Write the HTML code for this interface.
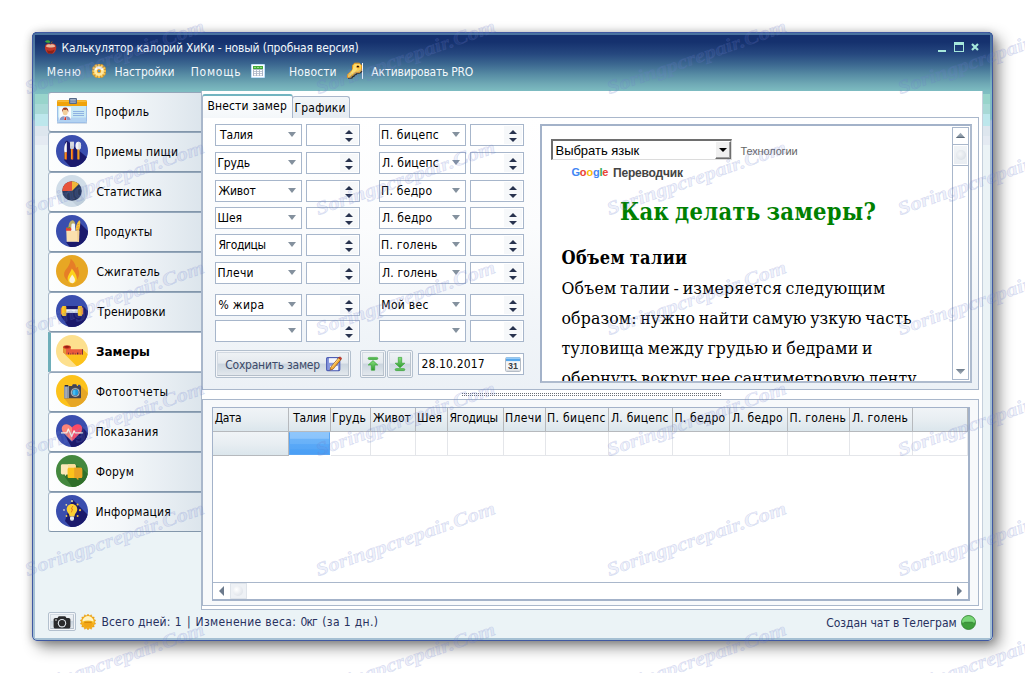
<!DOCTYPE html><html lang="ru"><head><meta charset="utf-8"><title>Калькулятор калорий ХиКи</title><style>
*{box-sizing:border-box;margin:0;padding:0}
html,body{width:1025px;height:673px;overflow:hidden;background:#fff}
body{position:relative;font-stretch:condensed;font-family:"DejaVu Sans Condensed","DejaVu Sans","Liberation Sans",sans-serif;font-size:12px;color:#000;line-height:14px}
.a{position:absolute}
.t{position:absolute;white-space:nowrap;line-height:14px;height:14px}
#win{left:32px;top:32px;width:961px;height:609px;border-radius:5px;
 box-shadow:6px 6px 15px rgba(0,0,0,.45),0 1px 9px rgba(0,0,0,.22);
 background:linear-gradient(to bottom,#15306e 0px,#15316e 10px,#26487f 22px,#3b6790 32px,#558aa3 42px,#6fa9b5 52px,#7dbcc1 59px,#80bec2 62px,#98d4cb 62px,#98d4cb 72px,#a8d9d6 72px,#a8d9d6 82px,#bde7ec 82px,#bde7ec 94px,#dde6ee 94px,#dde6ee 104px,#e4eaf2 104px,#e4eaf2 113px,#ebf3f6 113px,#ebf3f6 100%)}
#frame{left:32px;top:32px;width:961px;height:609px;border-radius:5px;border:1px solid #4059a2}
.fv{position:absolute;top:33px;width:2px;height:607px;background:linear-gradient(to bottom,#4a73a0 0px,#4a73a0 8px,#5a86a8 28px,#78b0be 50px,#80bcc4 60px,#80bcc4 86px,#a2bad2 88px,#a5c0d3 100%)}
.fh{position:absolute;left:33px;width:959px;height:2px}
.wt{color:#f1f7fb}
.sb{position:absolute;left:48px;width:154px;height:40px;border-bottom:1px solid #8397ab;border-left:1px solid #a9b9ca;border-top:1px solid #93a6ba;
 border-radius:3px 0 0 3px;background:linear-gradient(to right,#fdfefe 0%,#f5f8fa 45%,#e8eef3 75%,#dce5ec 100%)}
.sb .lbl{position:absolute;left:48px;top:12px;line-height:14px;white-space:nowrap}
.sb svg{position:absolute;left:7px;top:2px;width:32px;height:32px}
.sb.sel{background:#fff;border-left:3px solid #6eaeb9;border-top:1px solid #a9b7c6;border-bottom:1px solid #a9b7c6;border-radius:0;width:155px}
.sb.sel .lbl{font-weight:bold;left:45px}
.sb.sel svg{left:5px}
.cb{position:absolute;width:87px;height:22px;border:1px solid #a7b6cb;background:#fff}
.cb span{position:absolute;left:3px;top:3px;line-height:14px;white-space:nowrap}
.cb i{position:absolute;right:5px;top:7px;width:0;height:0;border-left:4.5px solid transparent;border-right:4.5px solid transparent;border-top:5px solid #84919e}
.sp{position:absolute;width:54px;height:22px;border:1px solid #a7b6cb;background:#fff}
.sp b{position:absolute;right:1px;top:1px;width:18px;height:18px;background:#f6f8fa}
.sp i{position:absolute;right:6.5px;width:0;height:0;border-left:4px solid transparent;border-right:4px solid transparent}
.sp i.u{top:4.5px;border-bottom:4.5px solid #27324e}
.sp i.d{top:13px;border-top:4.5px solid #27324e}
.btn{position:absolute;border:1px solid #b3c0ce;border-radius:2px;background:#f4f6f9}
.btn u{position:absolute;left:1px;top:1px;right:1px;bottom:1px;border:1px solid #d3dae2;border-right-color:#b9c3cd;border-bottom-color:#b4bec9;
 background:linear-gradient(to bottom,#eef2f5 0%,#e4e9ee 46%,#cbd5df 50%,#d3dce4 70%,#e3e8ed 100%);text-decoration:none}
.gh{position:absolute;top:408px;height:24px;border-right:1px solid #b6b9bd;border-bottom:1px solid #b6b9bd;
 background:linear-gradient(to bottom,#f0f4f7 0%,#e8eef2 50%,#dbe6ec 100%)}
.gh span{position:absolute;left:3px;top:4px;white-space:nowrap;line-height:14px}
.gc{position:absolute;top:432px;height:24px;border-right:1px solid #e4e6ea;border-bottom:1px solid #e4e6ea;background:#fff}
.web{font-family:"DejaVu Serif Condensed","DejaVu Serif","Liberation Serif",serif;color:#000}
.wm{position:absolute;white-space:nowrap;font-family:"Liberation Serif","DejaVu Serif",serif;font-style:italic;font-weight:bold;font-size:19px;line-height:22px;height:22px;color:rgba(120,138,215,.15);-webkit-text-stroke:.7px rgba(105,120,200,.19);transform:rotate(-19.4deg) scaleX(1.19);transform-origin:0 100%;pointer-events:none}
</style></head><body><div id="win" class="a"></div><svg class="a" style="left:43px;top:39px" width="15" height="16" viewBox="0 0 15 16"><path d="M2 2.200C4 .6 6.600 1 7.400 3.200 5.200 4.200 3.200 3.800 2 2.200z" fill="#3ea63a"/><path d="M8 4.400l1.200-2" stroke="#8a5a2a" stroke-width="1" fill="none"/><path d="M7.500 5C5.800 3.900 2.600 4.300 2 7.400c-.5 3 1.600 6.900 3.700 7.200 1 .15 1.400-.25 1.900-.25s1 .4 2 .25c2.100-.3 4.100-4.200 3.600-7.200C12.600 4.300 9.200 3.900 7.500 5z" fill="#c0392b"/><path d="M3 7.400c.5-2 2.500-2.600 4.500-1.700 2-.9 4.200-.3 4.700 1.700-1.600 1.400-7.600 1.400-9.200 0z" fill="#e8b9a0"/><path d="M4 11c2 1.200 5 1.200 7.600-.5-.6 2-1.600 3.600-2.800 3.900-.8.200-1.200-.2-1.700-.2s-.9.400-1.700.2C4.600 14.100 4.300 12.500 4 11z" fill="#8e2216"/></svg><div class="t wt" style="left:61.50px;top:41px;line-height:14px;height:14px;letter-spacing:-0.171px;">Калькулятор калорий ХиКи - новый (пробная версия)</div><div class="a" style="left:938px;top:50px;width:8px;height:2px;background:#a6e8db"></div><div class="a" style="left:954px;top:42px;width:10px;height:10px;border:1px solid #a6e8db;border-top-width:3px"></div><svg class="a" style="left:971px;top:43px" width="8" height="8" viewBox="0 0 8 8"><path d="M1 1l6 6M7 1L1 7" stroke="#a6e8db" stroke-width="2.200" fill="none"/></svg><div class="t wt" style="left:46.70px;top:65px;line-height:14px;height:14px;letter-spacing:0.660px;">Меню</div><svg class="a" style="left:92px;top:64px" width="14" height="14" viewBox="0 0 14 14"><g fill="#fbd56a" stroke="#e8930c" stroke-width=".7"><rect x="5.800" y="0" width="2.400" height="3.200" rx=".5" transform="rotate(0 7 7)"/><rect x="5.800" y="0" width="2.400" height="3.200" rx=".5" transform="rotate(30 7 7)"/><rect x="5.800" y="0" width="2.400" height="3.200" rx=".5" transform="rotate(60 7 7)"/><rect x="5.800" y="0" width="2.400" height="3.200" rx=".5" transform="rotate(90 7 7)"/><rect x="5.800" y="0" width="2.400" height="3.200" rx=".5" transform="rotate(120 7 7)"/><rect x="5.800" y="0" width="2.400" height="3.200" rx=".5" transform="rotate(150 7 7)"/><rect x="5.800" y="0" width="2.400" height="3.200" rx=".5" transform="rotate(180 7 7)"/><rect x="5.800" y="0" width="2.400" height="3.200" rx=".5" transform="rotate(210 7 7)"/><rect x="5.800" y="0" width="2.400" height="3.200" rx=".5" transform="rotate(240 7 7)"/><rect x="5.800" y="0" width="2.400" height="3.200" rx=".5" transform="rotate(270 7 7)"/><rect x="5.800" y="0" width="2.400" height="3.200" rx=".5" transform="rotate(300 7 7)"/><rect x="5.800" y="0" width="2.400" height="3.200" rx=".5" transform="rotate(330 7 7)"/></g><circle cx="7" cy="7" r="4.900" fill="#fde9a4"/><path d="M2.600 6.400a4.500 4.500 0 0 1 8.800 0c-2.800-1.300-6-1.300-8.800 0z" fill="#fffef8"/><circle cx="7" cy="7.100" r="2.200" fill="#f0a21c"/><circle cx="7" cy="7.100" r="1.200" fill="#4a8cc8"/></svg><div class="t wt" style="left:114.50px;top:65px;line-height:14px;height:14px;letter-spacing:-0.107px;">Настройки</div><div class="t wt" style="left:190.70px;top:65px;line-height:14px;height:14px;letter-spacing:0.771px;">Помощь</div><svg class="a" style="left:251px;top:64px" width="14" height="14" viewBox="0 0 14 14"><rect width="14" height="14" rx="1" fill="#bfe0fb"/><rect x="1" y="1" width="12" height="12" fill="#fff"/><rect x="2" y="2" width="10" height="3.200" fill="#45a83a"/><g fill="#8fe388"><rect x="2.900" y="3.100" width="2.200" height="1" rx=".4"/><rect x="5.900" y="3.100" width="2.200" height="1" rx=".4"/><rect x="8.900" y="3.100" width="2.200" height="1" rx=".4"/></g><rect x="2" y="5.200" width="10" height="6.800" fill="#a9b3c6"/><g fill="#fff"><rect x="2.9" y="5.9" width="2.200" height="1.300" rx=".3"/><rect x="5.9" y="5.9" width="2.200" height="1.300" rx=".3"/><rect x="8.9" y="5.9" width="2.200" height="1.300" rx=".3"/><rect x="2.9" y="8" width="2.200" height="1.300" rx=".3"/><rect x="5.9" y="8" width="2.200" height="1.300" rx=".3"/><rect x="8.9" y="8" width="2.200" height="1.300" rx=".3"/><rect x="2.9" y="10.1" width="2.200" height="1.300" rx=".3"/><rect x="5.9" y="10.1" width="2.200" height="1.300" rx=".3"/><rect x="8.9" y="10.1" width="2.200" height="1.300" rx=".3"/></g></svg><div class="t wt" style="left:289.00px;top:65px;line-height:14px;height:14px;letter-spacing:0.114px;">Новости</div><svg class="a" style="left:346px;top:62px" width="18" height="18" viewBox="0 0 18 18"><path d="M16.500 1v16" stroke="#f2f6fb" stroke-width="1"/><path d="M2 16.200l3.800-.2 1-1.500 1.300-.3.700-1.400 1.500-.3.700-1.200 3.600-.6 1.400-1.600" stroke="#2a1c08" stroke-width="1.300" fill="none" opacity=".85"/><path d="M8.500 1.200h5l2 2.200v4.800l-2 2.300H9.800L8.600 12l-1.400.2-.6 1.400-1.500.3-.8 1.500H1.500v-2.600l5-5.200V3.400z" fill="#fbd04e" stroke="#e5941c" stroke-width="1"/><path d="M9 2.200h4.400l1.400 1.600-7 7-4.800 3.700z" fill="#fde27e" opacity=".8"/><ellipse cx="11.900" cy="4.800" rx="1.700" ry="1.500" fill="#e08a1a"/><ellipse cx="11.900" cy="4.500" rx="1.100" ry=".8" fill="#1a1206"/></svg><div class="t wt" style="left:371.30px;top:65px;line-height:14px;height:14px;letter-spacing:-0.240px;">Активировать PRO</div><div class="sb" style="top:92px"><svg viewBox="0 0 32 32"><rect x="1" y="27" width="30" height="1.600" fill="#9fb4cf" opacity=".7"/><rect x="1.500" y="5.500" width="29" height="22" rx="1" fill="#c9e9f4" stroke="#9dbfe8" stroke-width="1"/><rect x="2" y="22.500" width="28" height="4.500" fill="#b3d3f2"/><path d="M1 6.500a1.500 1.500 0 0 1 1.500-1.500h27a1.500 1.500 0 0 1 1.500 1.500V11H1z" fill="#f0a30a"/><rect x="1.500" y="5.500" width="29" height="1.200" fill="#fbc64a"/><rect x="3.300" y="12.200" width="11.700" height="12.800" fill="#fdfdfd"/><path d="M3.600 25c.3-2.600 2.200-3.400 4-3.700h3.200c1.800.3 3.700 1.100 4 3.700z" fill="#8a9ccb"/><path d="M8.300 21.500h1.800l.4 3.500H7.900z" fill="#fff"/><path d="M8.700 22h1l.5 3H8.200z" fill="#d02a1e"/><ellipse cx="9.200" cy="17" rx="2.500" ry="3.200" fill="#f3cf9b"/><path d="M6.200 17.500c-.6-3 .6-5 3-5s3.600 2 3 5c-.3-1.600-.9-2.600-1.600-3-.8.500-2.200.5-2.900.1-.7.500-1.200 1.400-1.500 2.900z" fill="#9a3316"/><g stroke="#8fb2e2" stroke-width="1"><path d="M17 16.500h11M17 18.500h11M17 20.500h11"/></g><rect x="13" y="3" width="8" height="6" rx="1" fill="#566a8a"/><rect x="14.200" y="4.300" width="5.600" height="1.200" fill="#c8d3e3"/><rect x="14.200" y="6.500" width="5.600" height="1.200" fill="#aebbd0"/></svg></div><div class="t" style="left:95.70px;top:105px;line-height:14px;height:14px;letter-spacing:0.379px;">Профиль</div><div class="sb" style="top:132px"><svg viewBox="0 0 32 32"><defs><clipPath id="c2"><circle cx="16" cy="16" r="16"/></clipPath></defs><circle cx="16" cy="16" r="16" fill="#3a4eae"/><polygon clip-path="url(#c2)" points="9,7 11,5.500 40,30 40,40 22,40 8,25" fill="#1b1a6c"/><path d="M10.800 6.800c-2.600 2.400-3 7.400-2.300 10.800h2.300z" fill="#fafafa"/><rect x="8.500" y="17.400" width="2.300" height="7" fill="#f39a1e"/><rect x="9.900" y="17.400" width=".9" height="7" fill="#e5541f"/><path d="M14 6.800h4v5.600c0 1.200-.8 2-2 2s-2-.8-2-2z" fill="#c9ced6"/><path d="M15 6.800v4M16 6.800v4M17 6.800v4" stroke="#e8ebef" stroke-width=".6"/><rect x="14.900" y="14" width="2.200" height="10.400" fill="#f39a1e"/><rect x="16.200" y="14" width=".9" height="10.400" fill="#e5541f"/><ellipse cx="22.300" cy="10.800" rx="2.800" ry="4.100" fill="#f4f6f8"/><path d="M22.300 6.700a2.800 4.100 0 0 1 0 8.200z" fill="#d8dde4"/><rect x="21.300" y="14.500" width="2" height="9.900" fill="#f39a1e"/><rect x="22.500" y="14.500" width=".8" height="9.900" fill="#e5a01e"/></svg></div><div class="t" style="left:95.70px;top:145px;line-height:14px;height:14px;letter-spacing:0.232px;">Приемы пищи</div><div class="sb" style="top:172px"><svg viewBox="0 0 32 32"><defs><clipPath id="c3"><circle cx="16" cy="16" r="16"/></clipPath></defs><circle cx="16" cy="16" r="16" fill="#d0dde8"/><polygon clip-path="url(#c3)" points="16,26 23,19 40,34 40,44 30,40" fill="#bfcedb"/><circle cx="16" cy="16" r="9.800" fill="#2b3a5c"/><path d="M16 16V6.200A9.800 9.800 0 0 0 6.200 16z" fill="#e8543a"/><path d="M16 16V6.200a9.800 9.800 0 0 1 6.900 2.900z" fill="#f0b83a"/></svg></div><div class="t" style="left:96.40px;top:185px;line-height:14px;height:14px;letter-spacing:-0.067px;">Статистика</div><div class="sb" style="top:212px"><svg viewBox="0 0 32 32"><defs><clipPath id="c4"><circle cx="16" cy="16" r="16"/></clipPath></defs><circle cx="16" cy="16" r="16" fill="#3a4eae"/><polygon clip-path="url(#c4)" points="22,6 40,24 40,40 20,40 10,27 23,27" fill="#1b1a6c"/><path d="M12.500 14c-.4-4 1-8 3.300-8.600 1.800-.4 3.400 1.600 3.600 4.600l-1 5z" fill="#b9ab68"/><path d="M15.500 9.500c0-1.200 3.400-1.200 3.400 0l.5 6.500h-4.400z" fill="#f2f6fb"/><path d="M19.500 15.500c.2-4 1.600-8 3.300-9.800.8-.5 1.400 0 1.400 1 .2 3.400-.4 6.600-1.200 9.300z" fill="#f6c443"/><path d="M21 10l2.400-.8M20.500 12.500l2.700-.8M20.300 14.800l2.700-.8" stroke="#e59a24" stroke-width=".8"/><ellipse cx="12.600" cy="14.400" rx="2.700" ry="2.300" fill="#e8412f"/><path d="M11 12.300l1.600.8 1.400-1" stroke="#39b54a" stroke-width=".9" fill="none"/><path d="M10.300 15.700h13l-.3 11H10.700z" fill="#fbe0ae"/><path d="M21 15.700h2.300l-.3 11h-1.600z" fill="#f3d092"/></svg></div><div class="t" style="left:95.40px;top:225px;line-height:14px;height:14px;letter-spacing:0.023px;">Продукты</div><div class="sb" style="top:252px"><svg viewBox="0 0 32 32"><defs><clipPath id="c5"><circle cx="16" cy="16" r="16"/></clipPath></defs><circle cx="16" cy="16" r="16" fill="#e7a724"/><polygon clip-path="url(#c5)" points="0,0 0,0 0,0" fill="#e7a724"/><path d="M14.600 3.800c2.600 2 5.200 5.400 5.400 9.600.5-1 1.300-1.400 2.200-1.300-.4 1.600.6 3 .9 5 .6 4.200-1.600 7.600-4 9l-7 .2c-3-2.200-4.800-5.600-3.600-9.200.9-2.700 3.100-4.400 4.500-7.200.9-1.800 1.500-3.800 1.600-6.100z" fill="#e67e27"/><path d="M15.800 13.500c2.400 3 5 6.400 5 9.900 0 2.600-1.900 4.800-4.700 4.800s-4.500-2-4.500-4.500c0-3.400 3-6.200 4.200-10.200z" fill="#fcd21c"/><path d="M16.200 19.500c1.400 1.900 2.800 3.600 2.800 5.500 0 1.800-1.200 3.200-2.900 3.200S13.300 26.900 13.300 25.100c0-2 1.800-3.300 2.900-5.600z" fill="#fbf3dc"/></svg></div><div class="t" style="left:96.40px;top:265px;line-height:14px;height:14px;letter-spacing:0.075px;">Сжигатель</div><div class="sb" style="top:292px"><svg viewBox="0 0 32 32"><defs><clipPath id="c6"><circle cx="16" cy="16" r="16"/></clipPath></defs><circle cx="16" cy="16" r="16" fill="#3a4eae"/><polygon clip-path="url(#c6)" points="8,11 27,11 40,24 40,40 18,40 5,21" fill="#1b1a6c"/><rect x="10" y="14.200" width="12" height="3.600" fill="#eef1f6"/><rect x="10" y="16.200" width="12" height="1.600" fill="#cfd6e2"/><rect x="4.800" y="12.500" width="1.800" height="7" rx=".6" fill="#f08a3c"/><rect x="25.400" y="12.500" width="1.800" height="7" rx=".6" fill="#f08a3c"/><rect x="6" y="11" width="4.200" height="10" rx="1" fill="#fbc926"/><rect x="21.800" y="11" width="4.200" height="10" rx="1" fill="#fbc926"/><rect x="8.400" y="11" width="1.800" height="10" rx=".8" fill="#f5b51c"/><rect x="24.200" y="11" width="1.800" height="10" rx=".8" fill="#f5b51c"/></svg></div><div class="t" style="left:97.40px;top:305px;line-height:14px;height:14px;letter-spacing:0.077px;">Тренировки</div><div class="sb sel" style="top:332px"><svg viewBox="0 0 32 32"><defs><clipPath id="c7"><circle cx="16" cy="16" r="16"/></clipPath></defs><circle cx="16" cy="16" r="16" fill="#fde08e"/><polygon clip-path="url(#c7)" points="9,19.500 27,14.500 40,27.500 40,40 29.500,40" fill="#fcc21b"/><path d="M7.200 12v5.600l2.600 2h17.200v-5.400H14.800V12z" fill="#e95a3c"/><path d="M7.200 12.200l2.800 2v5.400l-2.800-2z" fill="#e29a35"/><ellipse cx="11" cy="12" rx="3.800" ry="1.700" fill="#c9321f"/><ellipse cx="11" cy="11.800" rx="2.300" ry=".9" fill="#8e1f14"/><g fill="#5a2a3a"><rect x="12" y="17.600" width=".8" height="1.800"/><rect x="14.300" y="18.500" width=".8" height=".9"/><rect x="16.600" y="17.600" width=".8" height="1.800"/><rect x="18.900" y="18.500" width=".8" height=".9"/><rect x="21" y="17.600" width="1.300" height="1.800"/><rect x="23.800" y="18.500" width=".8" height=".9"/><rect x="26.200" y="14.200" width=".8" height="5.400"/></g></svg></div><div class="t" style="left:95.90px;top:345px;line-height:14px;height:14px;font-weight:bold;letter-spacing:-0.012px;font-family:'DejaVu Sans','Liberation Sans',sans-serif;font-stretch:normal;">Замеры</div><div class="sb" style="top:372px"><svg viewBox="0 0 32 32"><defs><clipPath id="c8"><circle cx="16" cy="16" r="16"/></clipPath></defs><circle cx="16" cy="16" r="16" fill="#fcc21b"/><polygon clip-path="url(#c8)" points="25,11 40,26 40,40 21,40 8,23" fill="#e6a626"/><rect x="8" y="11" width="17" height="12.200" rx=".6" fill="#45444f"/><rect x="8" y="11" width="5" height="12.200" fill="#8d96a5"/><rect x="9.400" y="11" width="1.400" height="12.200" fill="#a9b1bd"/><rect x="8.600" y="10" width="3.800" height="1.400" rx=".6" fill="#2d2c36"/><path d="M16 11l.8-1.700h3.400L21 11z" fill="#3a3e5c"/><rect x="22" y="9.800" width="2.400" height="1.400" fill="#2a4a9a"/><circle cx="19.300" cy="17.400" r="4.700" fill="#6f7682"/><circle cx="19.300" cy="17.400" r="4" fill="#d5d9df"/><circle cx="19.300" cy="17.400" r="3.400" fill="#55555f"/><circle cx="19.300" cy="17.400" r="2.900" fill="#45bdf5"/><path d="M19.300 14.500a2.900 2.900 0 0 1 0 5.800z" fill="#1e9be0"/></svg></div><div class="t" style="left:95.70px;top:385px;line-height:14px;height:14px;letter-spacing:0.312px;">Фотоотчеты</div><div class="sb" style="top:412px"><svg viewBox="0 0 32 32"><defs><clipPath id="c9"><circle cx="16" cy="16" r="16"/></clipPath></defs><circle cx="16" cy="16" r="16" fill="#3a4eae"/><polygon clip-path="url(#c9)" points="26,12 40,26 40,40 20,40 8,19 16,27" fill="#1b1a6c"/><path d="M16 26.200L7.300 17.500C4.200 14 6 9.200 10.300 9.200c2.300 0 4.300 1.300 5.700 3.200z" fill="#fc8478"/><path d="M16 26.200l8.700-8.700c3.100-3.500 1.300-8.300-3-8.300-2.300 0-4.300 1.300-5.700 3.200z" fill="#fb4a66"/><path d="M5 17.800h5.800l1.500-3.800 3.400 7.400 2.400-5.600 1 2h7.700" stroke="#f4f1e6" stroke-width="1.300" fill="none" stroke-linejoin="round"/></svg></div><div class="t" style="left:95.40px;top:425px;line-height:14px;height:14px;letter-spacing:0.251px;">Показания</div><div class="sb" style="top:452px"><svg viewBox="0 0 32 32"><defs><clipPath id="c10"><circle cx="16" cy="16" r="16"/></clipPath></defs><circle cx="16" cy="16" r="16" fill="#44883e"/><polygon clip-path="url(#c10)" points="17,9 26,13 40,27 40,40 22,40 6,18" fill="#2f6f2a"/><path d="M6.500 9.200h11.600c1 0 1.600.6 1.600 1.600v7c0 1-.6 1.600-1.600 1.600h-7.600l-1.600 2v-2H6.500c-1 0-1.600-.6-1.600-1.600v-7c0-1 .6-1.600 1.600-1.600z" fill="#fde8b8"/><path d="M12 9.200h6.100c1 0 1.600.6 1.600 1.600v7c0 1-.6 1.600-1.600 1.600H12z" fill="#fcdf9a"/><path d="M13.200 12.800h11.400c1 0 1.600.6 1.600 1.600v7c0 1-.6 1.600-1.600 1.600h-2.400v2l-1.800-2h-7.200c-1 0-1.600-.6-1.600-1.600v-7c0-1 .6-1.600 1.600-1.600z" fill="#fcc21b"/><path d="M18.200 12.800h6.400c1 0 1.600.6 1.600 1.600v7c0 1-.6 1.600-1.600 1.600h-2.400v2l-1.800-2h-2.200z" fill="#e9a326"/></svg></div><div class="t" style="left:95.70px;top:465px;line-height:14px;height:14px;letter-spacing:0.215px;">Форум</div><div class="sb" style="top:492px"><svg viewBox="0 0 32 32"><defs><clipPath id="c11"><circle cx="16" cy="16" r="16"/></clipPath></defs><circle cx="16" cy="16" r="16" fill="#3a4eae"/><polygon clip-path="url(#c11)" points="16,4 40,28 40,40 22,40 9,26" fill="#1b1a6c"/><g fill="#f3c23c"><circle cx="16" cy="6.200" r="1.100" fill="#c9c8a8"/><circle cx="8" cy="15" r="1" fill="#b9bcc8"/><circle cx="24" cy="15.200" r="1.100"/><circle cx="10.300" cy="9.800" r=".9" fill="#f0e0a0"/><circle cx="21.600" cy="9.600" r="1"/><circle cx="10.500" cy="21" r=".9" fill="#e9c95a"/><circle cx="21.600" cy="21" r="1" /></g><path d="M16 9c3 0 5.300 2.300 5.300 5.200 0 2.400-1.600 3.600-2.400 5.200-.3.600-.4 1.500-.4 2.200h-5c0-.7-.1-1.600-.4-2.200-.8-1.600-2.400-2.800-2.400-5.200C10.700 11.300 13 9 16 9z" fill="#fcd034"/><path d="M16.800 11l-1.600 3h1.500l-1.400 3.400" stroke="#e6801c" stroke-width="1" fill="none"/><rect x="14" y="21.400" width="4" height="3.600" rx="1" fill="#e9edf2"/><rect x="14.600" y="24.400" width="2.800" height="1.400" rx=".6" fill="#cfd5dd"/></svg></div><div class="t" style="left:95.40px;top:505px;line-height:14px;height:14px;letter-spacing:0.217px;">Информация</div><div class="a" style="left:201px;top:91px;width:782px;height:519px;background:#fff;border:1px solid #a9b7cb;border-top:none;border-right-color:#c5d0dc"></div><div class="a" style="left:202px;top:117px;width:777px;height:273px;border:1px solid #a9b7cb;background:linear-gradient(to bottom,#fff 0%,#fbfcfd 40%,#f0f4f8 80%,#ecf1f6 100%)"></div><div class="a" style="left:292px;top:96px;width:58px;height:22px;border:1px solid #a9b7cb;border-bottom:none;border-radius:3px 3px 0 0;background:linear-gradient(to bottom,#f3f6f9,#e4ebf1)"></div><div class="t" style="left:294.50px;top:101px;line-height:14px;height:14px;letter-spacing:0.213px;">Графики</div><div class="a" style="left:202px;top:94px;width:91px;height:24px;border:1px solid #a9b7cb;border-top:2px solid #72b4c0;border-bottom:none;border-radius:3px 3px 0 0;background:linear-gradient(to bottom,#fff,#f4f7fa)"></div><div class="t" style="left:207.40px;top:99px;line-height:14px;height:14px;letter-spacing:0.143px;">Внести замер</div><div class="cb" style="left:215px;top:124px"><i></i></div><div class="t" style="left:220.00px;top:128px;line-height:14px;height:14px;letter-spacing:-0.156px;">Талия</div><div class="sp" style="left:306px;top:124px"><b></b><i class="u"></i><i class="d"></i></div><div class="cb" style="left:379px;top:124px"><i></i></div><div class="t" style="left:381.00px;top:128px;line-height:14px;height:14px;letter-spacing:0.256px;">П. бицепс</div><div class="sp" style="left:470px;top:124px"><b></b><i class="u"></i><i class="d"></i></div><div class="cb" style="left:215px;top:152px"><i></i></div><div class="t" style="left:217.50px;top:156px;line-height:14px;height:14px;letter-spacing:-0.261px;">Грудь</div><div class="sp" style="left:306px;top:152px"><b></b><i class="u"></i><i class="d"></i></div><div class="cb" style="left:379px;top:152px"><i></i></div><div class="t" style="left:382.00px;top:156px;line-height:14px;height:14px;letter-spacing:0.131px;">Л. бицепс</div><div class="sp" style="left:470px;top:152px"><b></b><i class="u"></i><i class="d"></i></div><div class="cb" style="left:215px;top:180px"><i></i></div><div class="t" style="left:218.50px;top:184px;line-height:14px;height:14px;letter-spacing:-0.153px;">Живот</div><div class="sp" style="left:306px;top:180px"><b></b><i class="u"></i><i class="d"></i></div><div class="cb" style="left:379px;top:180px"><i></i></div><div class="t" style="left:381.00px;top:184px;line-height:14px;height:14px;letter-spacing:0.272px;">П. бедро</div><div class="sp" style="left:470px;top:180px"><b></b><i class="u"></i><i class="d"></i></div><div class="cb" style="left:215px;top:207px"><i></i></div><div class="t" style="left:217.50px;top:211px;line-height:14px;height:14px;letter-spacing:-0.097px;">Шея</div><div class="sp" style="left:306px;top:207px"><b></b><i class="u"></i><i class="d"></i></div><div class="cb" style="left:379px;top:207px"><i></i></div><div class="t" style="left:382.00px;top:211px;line-height:14px;height:14px;letter-spacing:0.129px;">Л. бедро</div><div class="sp" style="left:470px;top:207px"><b></b><i class="u"></i><i class="d"></i></div><div class="cb" style="left:215px;top:234px"><i></i></div><div class="t" style="left:218.50px;top:238px;line-height:14px;height:14px;letter-spacing:-0.434px;">Ягодицы</div><div class="sp" style="left:306px;top:234px"><b></b><i class="u"></i><i class="d"></i></div><div class="cb" style="left:379px;top:234px"><i></i></div><div class="t" style="left:381.00px;top:238px;line-height:14px;height:14px;letter-spacing:0.268px;">П. голень</div><div class="sp" style="left:470px;top:234px"><b></b><i class="u"></i><i class="d"></i></div><div class="cb" style="left:215px;top:262px"><i></i></div><div class="t" style="left:217.50px;top:266px;line-height:14px;height:14px;letter-spacing:0.238px;">Плечи</div><div class="sp" style="left:306px;top:262px"><b></b><i class="u"></i><i class="d"></i></div><div class="cb" style="left:379px;top:262px"><i></i></div><div class="t" style="left:382.00px;top:266px;line-height:14px;height:14px;letter-spacing:0.143px;">Л. голень</div><div class="sp" style="left:470px;top:262px"><b></b><i class="u"></i><i class="d"></i></div><div class="cb" style="left:215px;top:294px"><i></i></div><div class="t" style="left:218.50px;top:298px;line-height:14px;height:14px;letter-spacing:0.343px;">% жира</div><div class="sp" style="left:306px;top:294px"><b></b><i class="u"></i><i class="d"></i></div><div class="cb" style="left:379px;top:294px"><i></i></div><div class="t" style="left:381.25px;top:298px;line-height:14px;height:14px;letter-spacing:0.313px;">Мой вес</div><div class="sp" style="left:470px;top:294px"><b></b><i class="u"></i><i class="d"></i></div><div class="cb" style="left:215px;top:320px"><i></i></div><div class="sp" style="left:306px;top:320px"><b></b><i class="u"></i><i class="d"></i></div><div class="cb" style="left:379px;top:320px"><i></i></div><div class="sp" style="left:470px;top:320px"><b></b><i class="u"></i><i class="d"></i></div><div class="btn" style="left:215px;top:350px;width:136px;height:28px"><u></u></div><div class="t" style="left:225.30px;top:358px;line-height:14px;height:14px;letter-spacing:-0.243px;color:#3b4a68;">Сохранить замер</div><svg class="a" style="left:326px;top:356px" width="16" height="16" viewBox="0 0 16 16"><rect x=".600" y="1.600" width="13.200" height="13" rx="1" fill="#8797dc" stroke="#4f5fb4" stroke-width="1.100"/><rect x="3" y="2.200" width="8" height="4.600" fill="#f4f6fd"/><rect x="4" y="9.800" width="8" height="4.400" fill="#eef1fb"/><rect x="5" y="10.800" width="2" height="2.600" fill="#5a6cc0"/><path d="M4.800 11.200l7.800-9.400 2.300 1.900-7.800 9.400-3 .9z" fill="#f7b13a" stroke="#8a4a12" stroke-width=".7"/><path d="M6 10.800l7-8.400" stroke="#fde08a" stroke-width=".9"/><path d="M12.600 1.800l2.300 1.900.7-.9c.5-.7-1.300-2.200-2.100-1.700z" fill="#d23a2e" stroke="#8a2a1a" stroke-width=".5"/></svg><div class="btn" style="left:360px;top:350px;width:26px;height:28px"><u></u></div><svg class="a" style="left:366px;top:356px" width="14" height="16" viewBox="0 0 14 16"><defs><linearGradient id="gg" x1="0" y1="0" x2="0" y2="1"><stop offset="0" stop-color="#86e07e"/><stop offset="1" stop-color="#2f9a2e"/></linearGradient></defs><g fill="url(#gg)" stroke="#3aa538" stroke-width=".7"><rect x="2.200" y="1.400" width="9.600" height="2" rx="1"/><path d="M7 4.600l4.800 4.400H8.700v5.200H5.300V9H2.200z"/></g></svg><div class="btn" style="left:387px;top:350px;width:26px;height:28px"><u></u></div><svg class="a" style="left:393px;top:356px" width="14" height="16" viewBox="0 0 14 16"><g fill="url(#gg)" stroke="#3aa538" stroke-width=".7"><rect x="2.200" y="12.600" width="9.600" height="2" rx="1"/><path d="M7 11.800L2.200 7.200h3.100V1.400h3.400v5.800h3.100z"/></g></svg><div class="a" style="left:418px;top:353px;width:106px;height:22px;border:1px solid #a7b6cb;background:#fff"></div><div class="t" style="left:421.40px;top:357px;line-height:14px;height:14px;letter-spacing:0.164px;">28.10.2017</div><svg class="a" style="left:505px;top:356px" width="16" height="16" viewBox="0 0 16 16"><rect x=".5" y="1.500" width="15" height="14" rx="1.200" fill="#f5f6f8" stroke="#b4bcc6"/><rect x="1" y="13.500" width="14" height="1.500" fill="#d9dde2"/><rect x="1" y="1.500" width="14" height="3.600" fill="#58a8ec"/><rect x="1" y="1.500" width="14" height="1.300" fill="#a8d4f8"/><text x="8" y="13" text-anchor="middle" style="font-family:'Liberation Sans',sans-serif;font-weight:bold;font-size:9px" fill="#3c3f44">31</text></svg><div class="a" style="left:540px;top:124px;width:432px;height:259px;border:2px solid #a3b2c9;border-bottom-color:#aebbce;border-right-color:#aebbce;background:#fff;overflow:hidden"><div class="a" style="left:9px;top:13px;width:181px;height:21px;border:2px solid #6e6e6e;border-right:1px solid #dcdcdc;border-bottom:1px solid #dcdcdc;background:#fff"></div><div class="t" style="left:13.50px;top:17px;line-height:15px;height:15px;font-size:13px;letter-spacing:-0.029px;font-family:'Liberation Sans','Liberation Sans',sans-serif;">Выбрать язык</div><div class="a" style="left:173px;top:15px;width:16px;height:18px;background:#f0f0f0;border:1px solid #fff;border-right-color:#6e6e6e;border-bottom-color:#6e6e6e;box-shadow:inset -1px -1px 0 #a0a0a0"></div><div class="a" style="left:177px;top:22px;width:0;height:0;border-left:4px solid transparent;border-right:4px solid transparent;border-top:4px solid #000"></div><div class="t" style="left:198.50px;top:19px;line-height:12px;height:12px;font-size:11px;letter-spacing:-0.138px;color:#666;font-family:'Liberation Sans','Liberation Sans',sans-serif;">Технологии</div><div class="t" style="left:29.5px;top:39px;font-size:11px;font-weight:bold;font-family:Liberation Sans,sans-serif;letter-spacing:-.2px"><span style="color:#4285f4">G</span><span style="color:#ea4335">o</span><span style="color:#fbbc05">o</span><span style="color:#4285f4">g</span><span style="color:#34a853">l</span><span style="color:#ea4335">e</span></div><div class="t" style="left:71.00px;top:40px;line-height:14px;height:14px;font-weight:bold;letter-spacing:-0.184px;color:#444;font-family:'Liberation Sans','Liberation Sans',sans-serif;">Переводчик</div><div class="t" style="left:78.00px;top:72px;line-height:28px;height:28px;font-size:23.5px;font-weight:bold;letter-spacing:0.329px;word-spacing:-1.8px;color:#008000;font-family:'DejaVu Serif Condensed','DejaVu Serif','Liberation Serif',serif;">Как делать замеры?</div><div class="t" style="left:19.50px;top:121px;line-height:21px;height:21px;font-size:18px;font-weight:bold;letter-spacing:0.340px;word-spacing:-1.2px;font-family:'DejaVu Serif Condensed','DejaVu Serif','Liberation Serif',serif;">Объем талии</div><div class="t" style="left:19.50px;top:152px;line-height:20px;height:20px;font-size:17.5px;letter-spacing:0.189px;word-spacing:-1.6px;font-family:'DejaVu Serif Condensed','DejaVu Serif','Liberation Serif',serif;">Объем талии - измеряется следующим</div><div class="t" style="left:19.50px;top:182px;line-height:20px;height:20px;font-size:17.5px;letter-spacing:0.144px;word-spacing:-1.6px;font-family:'DejaVu Serif Condensed','DejaVu Serif','Liberation Serif',serif;">образом: нужно найти самую узкую часть</div><div class="t" style="left:19.50px;top:212px;line-height:20px;height:20px;font-size:17.5px;letter-spacing:0.218px;word-spacing:-1.6px;font-family:'DejaVu Serif Condensed','DejaVu Serif','Liberation Serif',serif;">туловища между грудью и бедрами и</div><div class="t" style="left:19.50px;top:242px;line-height:20px;height:20px;font-size:17.5px;letter-spacing:0.100px;word-spacing:-1.6px;font-family:'DejaVu Serif Condensed','DejaVu Serif','Liberation Serif',serif;">обернуть вокруг нее сантиметровую ленту</div><div class="a" style="left:410px;top:1px;width:17px;height:253px;background:#fff;border:1px solid #a9b7cb"></div><div class="a" style="left:411px;top:18px;width:15px;height:1px;background:#a9b7cb"></div><svg class="a" style="left:413px;top:6px" width="11" height="7" viewBox="0 0 11 7"><defs><linearGradient id="ga" x1="0" y1="0" x2="0" y2="1"><stop offset="0" stop-color="#a9b4bf"/><stop offset=".7" stop-color="#8593a1"/><stop offset="1" stop-color="#4a5868"/></linearGradient></defs><path d="M5.500 .8L10.200 6H.8z" fill="url(#ga)"/></svg><div class="a" style="left:412px;top:20px;width:13px;height:18px;background:linear-gradient(to bottom,#f1f4f7,#e9edf2)"></div><div class="a" style="left:411px;top:39px;width:15px;height:1px;background:#a9b7cb"></div><div class="a" style="left:414px;top:24px;width:10px;height:10px;border-radius:5px;background:radial-gradient(circle at 40% 40%,#f4f6f8,#d3dae2)"></div><svg class="a" style="left:413px;top:242px" width="11" height="7" viewBox="0 0 11 7"><defs><linearGradient id="gb" x1="0" y1="0" x2="0" y2="1"><stop offset="0" stop-color="#6f7d8c"/><stop offset="1" stop-color="#a9b4bf"/></linearGradient></defs><path d="M.8 1h9.400L5.500 6.200z" fill="url(#gb)"/></svg></div><div class="a" style="left:462px;top:393px;width:259px;height:1px;background:repeating-linear-gradient(90deg,#6a6e74 0,#6a6e74 1px,transparent 1px,transparent 2px)"></div><div class="a" style="left:462px;top:395px;width:259px;height:1px;background:repeating-linear-gradient(90deg,#6a6e74 0,#6a6e74 1px,transparent 1px,transparent 2px)"></div><div class="a" style="left:202px;top:399px;width:777px;height:207px;border:1px solid #a9b7cb;background:#f7f9fb"></div><div class="a" style="left:212px;top:407px;width:758px;height:194px;border:1px solid #a3b2c9;border-right-width:2px;border-bottom-width:2px;background:#fff"></div><div class="gh" style="left:213px;width:76px"></div><div class="t" style="left:214.75px;top:411px;line-height:14px;height:14px;letter-spacing:-0.363px;">Дата</div><div class="gh" style="left:213px;width:76px;top:432px"></div><div class="gh" style="left:289px;width:42px"></div><div class="t" style="left:293.25px;top:411px;line-height:14px;height:14px;letter-spacing:-0.218px;">Талия</div><div class="a" style="left:289px;top:432px;width:41px;height:23px;border:1px solid #5aa6f4;border-top-color:#8ec5fb;background:linear-gradient(to bottom,#8ec6fb 0%,#8bc4fb 25%,#6cb3f8 30%,#68b1f8 50%,#59a8f7 55%,#56a6f6 75%,#4da1f5 80%,#4a9ff5 100%)"></div><div class="gh" style="left:331px;width:40px"></div><div class="t" style="left:332.00px;top:411px;line-height:14px;height:14px;letter-spacing:0.052px;">Грудь</div><div class="gc" style="left:331px;width:40px"></div><div class="gh" style="left:371px;width:45px"></div><div class="t" style="left:373.00px;top:411px;line-height:14px;height:14px;letter-spacing:-0.028px;">Живот</div><div class="gc" style="left:371px;width:45px"></div><div class="gh" style="left:416px;width:32px"></div><div class="t" style="left:417.00px;top:411px;line-height:14px;height:14px;letter-spacing:0.153px;">Шея</div><div class="gc" style="left:416px;width:32px"></div><div class="gh" style="left:448px;width:56px"></div><div class="t" style="left:449.50px;top:411px;line-height:14px;height:14px;letter-spacing:-0.267px;">Ягодицы</div><div class="gc" style="left:448px;width:56px"></div><div class="gh" style="left:504px;width:42px"></div><div class="t" style="left:505.00px;top:411px;line-height:14px;height:14px;letter-spacing:0.363px;">Плечи</div><div class="gc" style="left:504px;width:42px"></div><div class="gh" style="left:546px;width:63px"></div><div class="t" style="left:547.00px;top:411px;line-height:14px;height:14px;letter-spacing:0.350px;">П. бицепс</div><div class="gc" style="left:546px;width:63px"></div><div class="gh" style="left:609px;width:64px"></div><div class="t" style="left:611.00px;top:411px;line-height:14px;height:14px;letter-spacing:0.225px;">Л. бицепс</div><div class="gc" style="left:609px;width:64px"></div><div class="gh" style="left:673px;width:57px"></div><div class="t" style="left:674.50px;top:411px;line-height:14px;height:14px;letter-spacing:0.200px;">П. бедро</div><div class="gc" style="left:673px;width:57px"></div><div class="gh" style="left:730px;width:58px"></div><div class="t" style="left:732.00px;top:411px;line-height:14px;height:14px;letter-spacing:0.200px;">Л. бедро</div><div class="gc" style="left:730px;width:58px"></div><div class="gh" style="left:788px;width:62px"></div><div class="t" style="left:789.50px;top:411px;line-height:14px;height:14px;letter-spacing:0.268px;">П. голень</div><div class="gc" style="left:788px;width:62px"></div><div class="gh" style="left:850px;width:63px"></div><div class="t" style="left:852.00px;top:411px;line-height:14px;height:14px;letter-spacing:0.205px;">Л. голень</div><div class="gc" style="left:850px;width:63px"></div><div class="gh" style="left:913px;width:55px"></div><div class="gc" style="left:913px;width:55px"></div><div class="a" style="left:213px;top:582px;width:755px;height:17px;background:#fff;border-top:1px solid #a9b7cb"></div><div class="a" style="left:230px;top:583px;width:17px;height:16px;background:#eef1f5;border:1px solid #dfe4ea"></div><div class="a" style="left:233px;top:586px;width:10px;height:10px;border-radius:5px;background:radial-gradient(circle at 35% 35%,#fff,#d5dbe3)"></div><div class="a" style="left:219px;top:586px;width:0;height:0;border-top:5px solid transparent;border-bottom:5px solid transparent;border-right:5px solid #6c7a8c"></div><div class="a" style="left:957px;top:586px;width:0;height:0;border-top:5px solid transparent;border-bottom:5px solid transparent;border-left:5px solid #6c7a8c"></div><div class="btn" style="left:48px;top:612px;width:28px;height:19px"><u></u></div><svg class="a" style="left:53px;top:615px" width="18" height="15" viewBox="0 0 18 15"><path d="M6.200 1.200h5.600c.5 0 .8.200 1 .6l.6 1.200H15.600c1 0 1.800.8 1.800 1.800v7c0 1-.8 1.800-1.800 1.800H2.400c-1 0-1.800-.8-1.800-1.800v-7C.6 3.800 1.400 3 2.400 3h2.200l.6-1.200c.2-.4.500-.6 1-.6z" fill="#2a2a2c"/><circle cx="9" cy="8.200" r="4.200" fill="#e3e8ee"/><circle cx="9" cy="8.200" r="3.100" fill="#2a2a2c"/><circle cx="3" cy="5" r=".8" fill="#f4f4f4"/></svg><svg class="a" style="left:80px;top:614px" width="16" height="16" viewBox="0 0 16 16"><polygon points="8.00,0.00 9.42,1.76 11.47,0.79 11.99,3.00 14.25,3.01 13.77,5.22 15.80,6.22 14.40,8.00 15.80,9.78 13.77,10.78 14.25,12.99 11.99,13.00 11.47,15.21 9.42,14.24 8.00,16.00 6.58,14.24 4.53,15.21 4.01,13.00 1.75,12.99 2.23,10.78 0.20,9.78 1.60,8.00 0.20,6.22 2.23,5.22 1.75,3.01 4.01,3.00 4.53,0.79 6.58,1.76" fill="#f2a818" stroke="#e39a10" stroke-width=".4"/><circle cx="8" cy="8" r="5.800" fill="#fbc62a"/><path d="M2.400 7.600a5.600 5.600 0 0 1 11.200 0c-3.600-1.400-7.600-1.400-11.200 0z" fill="#fff3c4"/><path d="M3 8.800h10a5 5 0 0 1-10 0z" fill="#f2a616"/><rect x="4.200" y="7.600" width="7.600" height="1.300" rx=".3" fill="#d88a0a"/></svg><div class="t" style="left:101.50px;top:615px;line-height:14px;height:14px;letter-spacing:0.133px;color:#27315f;">Всего дней:</div><div class="t" style="left:174.70px;top:615px;line-height:14px;height:14px;color:#27315f;">1</div><div class="t" style="left:187.00px;top:615px;line-height:14px;height:14px;color:#27315f;">|</div><div class="t" style="left:195.60px;top:615px;line-height:14px;height:14px;letter-spacing:0.327px;color:#27315f;">Изменение веса:</div><div class="t" style="left:300.50px;top:615px;line-height:14px;height:14px;letter-spacing:-0.894px;color:#27315f;">0кг</div><div class="t" style="left:322.20px;top:615px;line-height:14px;height:14px;letter-spacing:0.373px;color:#27315f;">(за 1 дн.)</div><div class="t" style="left:826.30px;top:616px;line-height:14px;height:14px;letter-spacing:-0.034px;color:#27315f;">Создан чат в Телеграм</div><svg class="a" style="left:961px;top:615px" width="15" height="15" viewBox="0 0 15 15"><circle cx="7.500" cy="7.500" r="7" fill="#3f9e3c" stroke="#2d7f2b" stroke-width=".8"/><path d="M.9 7.500a6.600 6.600 0 0 1 13.200 0z" fill="#79d678"/><rect x="3" y="6.700" width="9" height="1.600" rx=".8" fill="#3f8f3c"/></svg><div class="fv" style="left:33px"></div><div class="fv" style="left:990px"></div><div class="fh" style="top:33px;background:#4a73a0;border-radius:4px 4px 0 0"></div><div class="fh" style="top:638px;background:#a5c0d3;border-radius:0 0 4px 4px"></div><div id="frame" class="a"></div><div class="wm" style="left:29px;top:77.0px">Soringpcrepair.Com</div><div class="wm" style="left:320px;top:77.0px">Soringpcrepair.Com</div><div class="wm" style="left:611px;top:77.0px">Soringpcrepair.Com</div><div class="wm" style="left:902px;top:77.0px">Soringpcrepair.Com</div><div class="wm" style="left:29px;top:197.5px">Soringpcrepair.Com</div><div class="wm" style="left:320px;top:197.5px">Soringpcrepair.Com</div><div class="wm" style="left:611px;top:197.5px">Soringpcrepair.Com</div><div class="wm" style="left:902px;top:197.5px">Soringpcrepair.Com</div><div class="wm" style="left:29px;top:318.0px">Soringpcrepair.Com</div><div class="wm" style="left:320px;top:318.0px">Soringpcrepair.Com</div><div class="wm" style="left:611px;top:318.0px">Soringpcrepair.Com</div><div class="wm" style="left:902px;top:318.0px">Soringpcrepair.Com</div><div class="wm" style="left:29px;top:438.5px">Soringpcrepair.Com</div><div class="wm" style="left:320px;top:438.5px">Soringpcrepair.Com</div><div class="wm" style="left:611px;top:438.5px">Soringpcrepair.Com</div><div class="wm" style="left:902px;top:438.5px">Soringpcrepair.Com</div><div class="wm" style="left:29px;top:559.0px">Soringpcrepair.Com</div><div class="wm" style="left:320px;top:559.0px">Soringpcrepair.Com</div><div class="wm" style="left:611px;top:559.0px">Soringpcrepair.Com</div><div class="wm" style="left:902px;top:559.0px">Soringpcrepair.Com</div><div class="wm" style="left:29px;top:679.5px">Soringpcrepair.Com</div><div class="wm" style="left:320px;top:679.5px">Soringpcrepair.Com</div><div class="wm" style="left:611px;top:679.5px">Soringpcrepair.Com</div><div class="wm" style="left:902px;top:679.5px">Soringpcrepair.Com</div></body></html>
